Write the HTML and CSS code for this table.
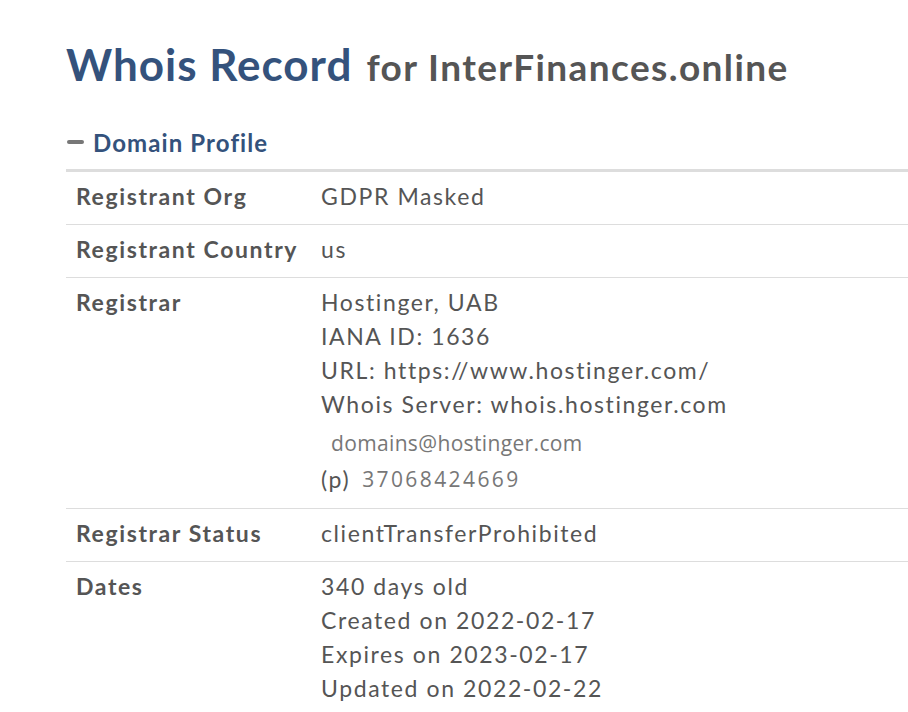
FILE: index.html
```html
<!DOCTYPE html>
<html>
<head>
<meta charset="utf-8">
<link rel="stylesheet" href="styles.css">
</head>
<body>
<div class="page">
  <h1 class="title"><span class="title-main">Whois Record</span><span class="title-sub">for InterFinances.online</span></h1>
  <div class="section-head"><span class="minus"></span><span class="section-title">Domain Profile</span></div>
  <div class="table">
    <div class="row">
      <div class="label">Registrant Org</div>
      <div class="value">GDPR Masked</div>
    </div>
    <div class="row">
      <div class="label">Registrant Country</div>
      <div class="value">us</div>
    </div>
    <div class="row">
      <div class="label">Registrar</div>
      <div class="value">
        <div>Hostinger, UAB</div>
        <div>IANA ID: 1636</div>
        <div>URL: https://www.hostinger.com/</div>
        <div>Whois Server: whois.hostinger.com</div>
        <div class="email">domains@hostinger.com</div>
        <div class="phone"><span class="p">(p)</span><span class="num">37068424669</span></div>
      </div>
    </div>
    <div class="row">
      <div class="label">Registrar Status</div>
      <div class="value">clientTransferProhibited</div>
    </div>
    <div class="row">
      <div class="label">Dates</div>
      <div class="value">
        <div>340 days old</div>
        <div>Created on 2022-02-17</div>
        <div>Expires on 2023-02-17</div>
        <div>Updated on 2022-02-22</div>
      </div>
    </div>
  </div>
</div>
</body>
</html>
```
FILE: styles.css
```css
html, body {
  margin: 0;
  padding: 0;
  background: #fff;
}
body {
  font-family: Lato, "Open Sans", sans-serif;
  color: #555;
}
.page {
  padding: 36px 0 0 66px;
}
.title {
  margin: 0;
  font-weight: 700;
  line-height: 56px;
  white-space: nowrap;
}
.title-main {
  font-size: 44px;
  color: #34527c;
  letter-spacing: 1px;
  margin-right: 14px;
}
.title-sub {
  font-size: 37px;
  color: #555;
  letter-spacing: 1.4px;
}
.section-head {
  display: flex;
  align-items: center;
  margin-top: 30px;
  height: 30px;
}
.minus {
  display: inline-block;
  width: 17px;
  height: 4px;
  border-radius: 2px;
  background: #777;
  margin: 0 9px 0 1px;
}
.section-title {
  font-size: 24px;
  font-weight: 700;
  color: #34527c;
  letter-spacing: 1.1px;
}
.table {
  margin-top: 12px;
  border-top: 3px solid #ddd;
}
.row {
  display: grid;
  grid-template-columns: 245px 1fr;
  border-bottom: 1px solid #ddd;
  padding: 7px 0 11px 10px;
  font-size: 23px;
  line-height: 34px;
  letter-spacing: 1.6px;
}
.label {
  font-weight: 700;
  color: #555;
  white-space: nowrap;
  letter-spacing: 1.6px;
}
.value {
  color: #555;
  white-space: nowrap;
}
.email {
  font-family: "Open Sans", sans-serif;
  font-size: 21px;
  color: #777;
  letter-spacing: 0.35px;
  padding-left: 10px;
  line-height: 36px;
  margin-top: 4px;
}
.phone {
  display: flex;
  align-items: center;
  line-height: 36px;
}
.num {
  font-family: "Open Sans", sans-serif;
  font-size: 21px;
  color: #777;
  letter-spacing: 2.4px;
  margin-left: 12px;
}
```
